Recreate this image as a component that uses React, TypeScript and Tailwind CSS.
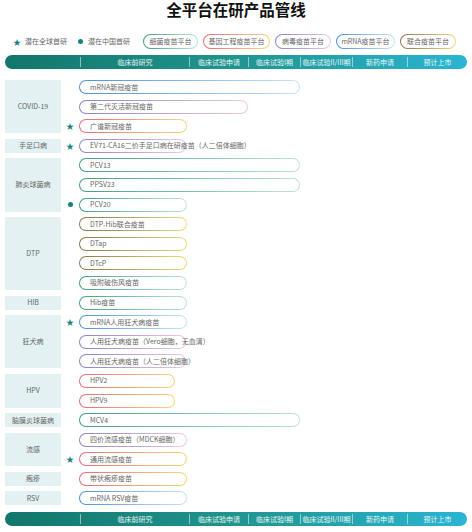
import React from 'react';

type Tono = 'azul' | 'morado' | 'rojo' | 'verde' | 'marron';

const gradientes: Record<Tono, string> = {
  azul: 'bg-linear-to-r from-[#4d8fd9] to-[#c9e4f5]',
  morado: 'bg-linear-to-r from-[#8f7fc4] to-[#ebcbe3]',
  rojo: 'bg-linear-to-r from-[#e4687c] to-[#f4d87c]',
  verde: 'bg-linear-to-r from-[#3c9e86] to-[#bfe5d3]',
  marron: 'bg-linear-to-r from-[#8b7752] to-[#f2da7e]',
};

interface Vacuna {
  nombre: string;
  tono: Tono;
  ancho: string;
  marca?: 'star' | 'dot';
}

interface Grupo {
  categoria: string;
  vacunas: Vacuna[];
}

const grupos: Grupo[] = [
  {
    categoria: 'COVID-19',
    vacunas: [
      { nombre: 'mRNA新冠疫苗', tono: 'azul', ancho: 'w-[221px]' },
      { nombre: '第二代灭活新冠疫苗', tono: 'morado', ancho: 'w-[169px]' },
      { nombre: '广谱新冠疫苗', tono: 'rojo', ancho: 'w-[108px]', marca: 'star' },
    ],
  },
  {
    categoria: '手足口病',
    vacunas: [
      { nombre: 'EV71-CA16二价手足口病在研疫苗（人二倍体细胞）', tono: 'morado', ancho: 'w-[107px]', marca: 'star' },
    ],
  },
  {
    categoria: '肺炎球菌病',
    vacunas: [
      { nombre: 'PCV13', tono: 'verde', ancho: 'w-[221px]' },
      { nombre: 'PPSV23', tono: 'verde', ancho: 'w-[221px]' },
      { nombre: 'PCV20', tono: 'verde', ancho: 'w-[108px]', marca: 'dot' },
    ],
  },
  {
    categoria: 'DTP',
    vacunas: [
      { nombre: 'DTP-Hib联合疫苗', tono: 'marron', ancho: 'w-[108px]' },
      { nombre: 'DTap', tono: 'marron', ancho: 'w-[108px]' },
      { nombre: 'DTcP', tono: 'marron', ancho: 'w-[108px]' },
      { nombre: '吸附破伤风疫苗', tono: 'verde', ancho: 'w-[108px]' },
    ],
  },
  {
    categoria: 'HIB',
    vacunas: [{ nombre: 'Hib疫苗', tono: 'verde', ancho: 'w-[108px]' }],
  },
  {
    categoria: '狂犬病',
    vacunas: [
      { nombre: 'mRNA人用狂犬病疫苗', tono: 'azul', ancho: 'w-[108px]', marca: 'star' },
      { nombre: '人用狂犬病疫苗（Vero细胞，无血清）', tono: 'morado', ancho: 'w-[107px]' },
      { nombre: '人用狂犬病疫苗（人二倍体细胞）', tono: 'morado', ancho: 'w-[107px]' },
    ],
  },
  {
    categoria: 'HPV',
    vacunas: [
      { nombre: 'HPV2', tono: 'rojo', ancho: 'w-[96px]' },
      { nombre: 'HPV9', tono: 'rojo', ancho: 'w-[96px]' },
    ],
  },
  {
    categoria: '脑膜炎球菌病',
    vacunas: [{ nombre: 'MCV4', tono: 'verde', ancho: 'w-[221px]' }],
  },
  {
    categoria: '流感',
    vacunas: [
      { nombre: '四价流感疫苗（MDCK细胞）', tono: 'morado', ancho: 'w-[108px]' },
      { nombre: '通用流感疫苗', tono: 'rojo', ancho: 'w-[108px]', marca: 'star' },
    ],
  },
  {
    categoria: '疱疹',
    vacunas: [{ nombre: '带状疱疹疫苗', tono: 'rojo', ancho: 'w-[108px]' }],
  },
  {
    categoria: 'RSV',
    vacunas: [{ nombre: 'mRNA RSV疫苗', tono: 'azul', ancho: 'w-[108px]' }],
  },
];

const plataformas: { nombre: string; tono: Tono; ancho: string }[] = [
  { nombre: '细菌疫苗平台', tono: 'verde', ancho: 'w-[55px]' },
  { nombre: '基因工程疫苗平台', tono: 'rojo', ancho: 'w-[67px]' },
  { nombre: '病毒疫苗平台', tono: 'morado', ancho: 'w-[56px]' },
  { nombre: 'mRNA疫苗平台', tono: 'azul', ancho: 'w-[59px]' },
  { nombre: '联合疫苗平台', tono: 'marron', ancho: 'w-[56px]' },
];

const fases = ['临床前研究', '临床试验申请', '临床试验I期', '临床试验II/III期', '新药申请', '预计上市'];

const BarraFases = () => (
  <div className="mx-[5px] h-[14px] rounded-full bg-linear-to-r from-[#12766b] via-[#1f958f] to-[#2bb5d3] grid grid-cols-[75px_109px_59px_52px_52px_55px_1fr] items-center text-[7px] text-white/90">
    <div />
    {fases.map((f) => (
      <div key={f} className="h-[10px] border-l border-white/50 flex items-center justify-center leading-none whitespace-nowrap">
        {f}
      </div>
    ))}
  </div>
);

const Estrella = () => <span className="text-[#14837f] text-[8px] leading-none">★</span>;
const Punto = () => <span className="block w-[5px] h-[5px] rounded-full bg-[#14837f]" />;

export default function App() {
  return (
    <div
      className="w-[472px] h-[532px] bg-white overflow-hidden text-[#666]"
      style={{ fontFamily: '"Noto Sans CJK SC", "Noto Sans", sans-serif' }}
    >
      <h1 className="text-center text-[15.5px] font-bold leading-[19px] text-[#111]">全平台在研产品管线</h1>

      {/* leyenda */}
      <div className="mt-[15px] flex items-center h-[15px] pl-[13px] text-[7px]">
        <div className="flex items-center gap-[4px]">
          <Estrella />
          <span>潜在全球首研</span>
        </div>
        <div className="flex items-center gap-[5px] ml-[11px]">
          <Punto />
          <span>潜在中国首研</span>
        </div>
        <div className="flex items-center gap-[5px] ml-[13px]">
          {plataformas.map((p) => (
            <div key={p.nombre} className={`${gradientes[p.tono]} ${p.ancho} h-[15px] rounded-full p-px`}>
              <div className="h-full w-full rounded-full bg-white flex items-center justify-center leading-none whitespace-nowrap">
                {p.nombre}
              </div>
            </div>
          ))}
        </div>
      </div>

      <div className="mt-[6px]">
        <BarraFases />
      </div>

      {/* filas */}
      <div className="mt-[11px] mx-[5px] flex flex-col gap-[5.6px]">
        {grupos.map((g) => (
          <div key={g.categoria} className="flex">
            <div className="w-[56px] bg-[#e4f1f3] flex items-center justify-center text-[7px] leading-none">
              {g.categoria}
            </div>
            <div className="flex flex-col gap-[5.6px]">
              {g.vacunas.map((v) => (
                <div key={v.nombre} className="flex items-center h-[14px]">
                  <div className="w-[18px] flex items-center justify-center">
                    {v.marca === 'star' && <Estrella />}
                    {v.marca === 'dot' && <Punto />}
                  </div>
                  <div className={`${gradientes[v.tono]} ${v.ancho} h-[14px] rounded-full p-px`}>
                    <div className="h-full w-full rounded-full bg-white flex items-center pl-[10px] text-[7px] leading-none whitespace-nowrap">
                      {v.nombre}
                    </div>
                  </div>
                </div>
              ))}
            </div>
          </div>
        ))}
      </div>

      <div className="mt-[7px]">
        <BarraFases />
      </div>
    </div>
  );
}
